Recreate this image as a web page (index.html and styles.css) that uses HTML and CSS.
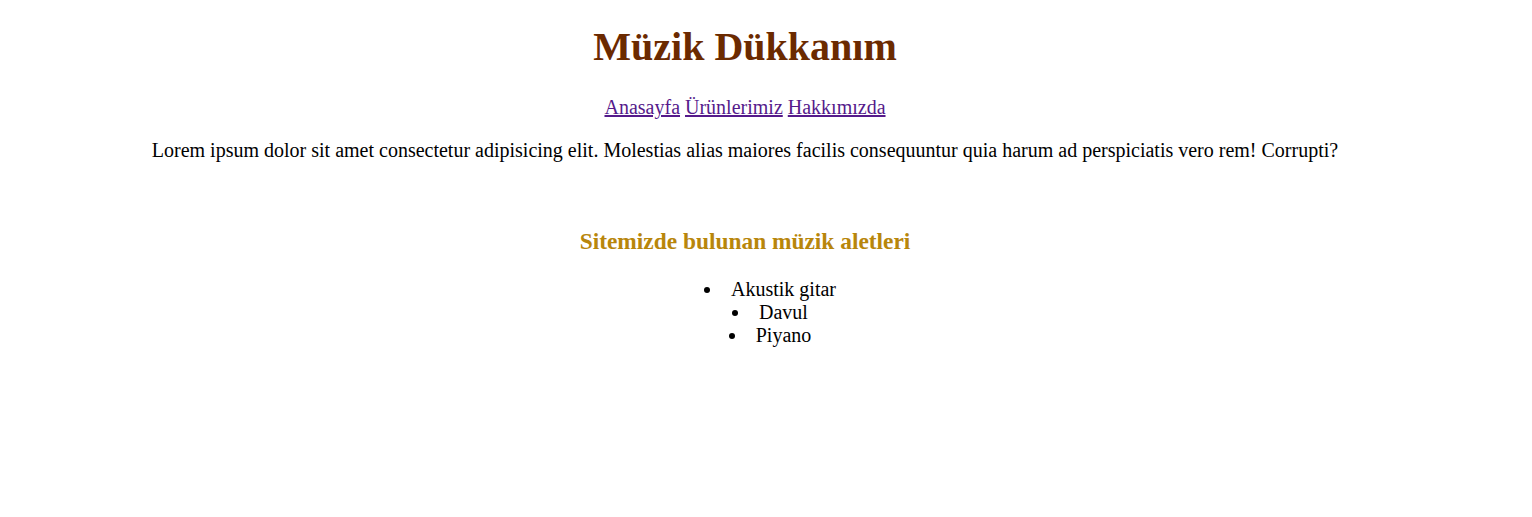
FILE: index.html
```html
<!DOCTYPE html>
<html lang="tr">
<head>
<meta charset="utf-8">
<title>Müzik Dükkanım</title>
<link rel="stylesheet" href="styles.css">
</head>
<body>
<main class="page">
  <h1 class="title">Müzik Dükkanım</h1>
  <nav class="nav">
    <a class="nav-link" href="#">Anasayfa</a>
    <a class="nav-link" href="#">Ürünlerimiz</a>
    <a class="nav-link" href="#">Hakkımızda</a>
  </nav>
  <p class="intro">Lorem ipsum dolor sit amet consectetur adipisicing elit. Molestias alias maiores facilis consequuntur quia harum ad perspiciatis vero rem! Corrupti?</p>
  <h3 class="subtitle">Sitemizde bulunan müzik aletleri</h3>
  <ul class="list">
    <li>Akustik gitar</li>
    <li>Davul</li>
    <li>Piyano</li>
  </ul>
</main>
</body>
</html>
```

FILE: styles.css
```css
html, body {
  margin: 0;
  background: #ffffff;
}
body {
  font-family: "Liberation Serif", "Times New Roman", serif;
  font-size: 20px;
  color: #000000;
}
.page {
  padding: 0 50px 0 8px;
  text-align: center;
}
.title {
  color: #6b2a00;
  font-size: 40px;
  font-weight: bold;
  margin: 23px 0 26px;
}
.nav {
  margin: 0;
}
.nav-link {
  color: #551a8b;
}
.intro {
  margin: 20px 0 66px;
}
.subtitle {
  color: #b8860b;
  font-size: 23.4px;
  margin: 0 0 23px;
}
.list {
  margin: 0;
  padding-left: 50px;
  list-style-position: inside;
}
.list li {
  list-style-type: disc;
}
```
